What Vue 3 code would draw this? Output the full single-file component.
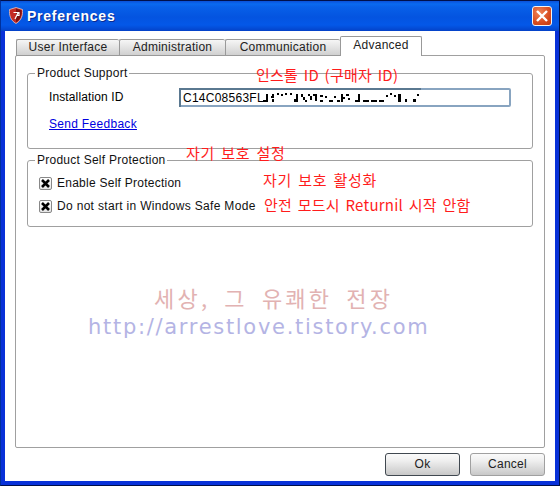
<script setup>
const tabs = [
  { label: 'User Interface', width: 103 },
  { label: 'Administration', width: 106 },
  { label: 'Communication', width: 115 }
]
const masks = [
  [0,8,5,2],[3,2,2,8],[9,2,2,2],[8,4,3,2],[9,7,2,3],[14,1,2,2],[18,2,2,2],[22,1,2,2],[27,1,2,2],
  [31,7,3,3],[33,2,2,8],[38,2,2,3],[40,5,2,3],[42,8,2,2],[45,2,2,2],[47,4,2,4],[50,2,2,2],[52,2,2,7],[57,3,3,2],[57,8,3,2],
  [62,4,2,2],[66,8,4,2],[71,4,2,2],[74,8,3,2],[78,2,2,8],[80,5,2,2],[83,2,3,2],[85,6,2,2],
  [92,8,3,2],[95,2,2,8],[100,8,6,2],[108,8,6,2],[116,8,5,2],[123,3,2,2],[127,1,2,2],[131,3,2,2],
  [135,2,3,8],[142,7,2,3],[150,7,3,3],[154,2,2,2]
]
</script>

<template>
  <div class="window">
    <header class="titlebar">
      <svg class="app-icon" width="14" height="17" viewBox="0 0 14 17">
        <path d="M7 .5 13.500 2.500C14 8 12.500 13.500 7 16.500 1.500 13.500 0 8 .5 2.500Z" fill="#c42a24" stroke="#e8c8c0" stroke-width=".8" />
        <path d="M7 1.500 12.500 3.200C13 8 11.500 12.500 7 15.200Z" fill="#7d1312" />
        <path d="M4.500 5.500H9.200L6 12M7.500 8.500H10V5" fill="none" stroke="#fff" stroke-width="1.200" />
      </svg>
      <span class="title">Preferences</span>
      <button class="close" aria-label="Close">
        <svg width="12" height="12" viewBox="0 0 12 12">
          <path d="M1 1 11 11M11 1 1 11" stroke="#fff" stroke-width="2.400" />
        </svg>
      </button>
    </header>

    <div class="client">
      <nav class="tabs">
        <div v-for="tab in tabs" :key="tab.label" class="tab" :style="{ width: tab.width + 'px' }">{{ tab.label }}</div>
        <div class="tab active">Advanced</div>
      </nav>

      <main class="panel">
        <fieldset class="group support">
          <legend>Product Support</legend>
          <div class="id-row">
            <label class="id-label">Installation ID</label>
            <div class="id-input">
              <span>C14C08563FL</span>
              <svg class="mask" width="160" height="12" viewBox="0 0 160 12">
                <rect v-for="(m, i) in masks" :key="i" :x="m[0]" :y="m[1]" :width="m[2]" :height="m[3]" fill="#000" />
              </svg>
            </div>
          </div>
          <a class="link" href="#">Send Feedback</a>
        </fieldset>

        <fieldset class="group protection">
          <legend>Product Self Protection</legend>
          <div class="check-row">
            <span class="check">
              <svg width="9" height="9" viewBox="0 0 9 9"><path d="M1 1 8 8M8 1 1 8" stroke="#000" stroke-width="2.600" /></svg>
            </span>
            <span>Enable Self Protection</span>
          </div>
          <div class="check-row">
            <span class="check">
              <svg width="9" height="9" viewBox="0 0 9 9"><path d="M1 1 8 8M8 1 1 8" stroke="#000" stroke-width="2.600" /></svg>
            </span>
            <span class="long">Do not start in Windows Safe Mode</span>
          </div>
        </fieldset>
      </main>

      <footer class="footer">
        <button class="btn default">Ok</button>
        <button class="btn">Cancel</button>
      </footer>
    </div>

    <span class="note n1">인스톨 ID (구매자 ID)</span>
    <span class="note n2">자기 보호 설정</span>
    <span class="note n3">자기 보호 활성화</span>
    <span class="note n4">안전 모드시 Returnil 시작 안함</span>
    <span class="mark mark-ko">세상, 그 유쾌한 전장</span>
    <span class="mark mark-url">http://arrestlove.tistory.com</span>
  </div>
</template>

<style scoped>
.window {
  position: relative;
  width: 560px;
  height: 486px;
  box-sizing: border-box;
  display: flex;
  flex-direction: column;
  overflow: hidden;
  background: #0831d9;
  border: 1px solid #00104a;
  border-left-color: #00309c;
  font-family: "Liberation Sans", Arial, sans-serif;
  font-size: 12px;
  letter-spacing: 0.25px;
  color: #000;
}
.titlebar {
  height: 30px;
  flex: none;
  display: flex;
  align-items: center;
  padding: 0 7px 1px 8px;
  box-sizing: border-box;
  background: linear-gradient(#0a50d8 0, #0a6af0 3px, #0860e8 6px, #0454e0 16px, #0458e8 24px, #0442c8 30px);
}
.app-icon {
  flex: none;
}
.title {
  margin-left: 4px;
  color: #fff;
  font-size: 14px;
  font-weight: 700;
  letter-spacing: 0.75px;
  text-shadow: 1px 1px 0 #0a2a90;
}
.close {
  margin-left: auto;
  width: 20px;
  height: 20px;
  padding: 0;
  display: flex;
  align-items: center;
  justify-content: center;
  border: 1px solid #f4f4f4;
  border-radius: 3px;
  background: radial-gradient(circle at 35% 30%, #ee8458, #d84c20 60%, #c03810);
}
.client {
  flex: 1;
  min-height: 0;
  margin: 0 4px 4px 4px;
  padding: 5px 10px 5px 10px;
  display: flex;
  flex-direction: column;
  background: #fff;
}
.tabs {
  height: 20px;
  flex: none;
  display: flex;
  align-items: flex-end;
  padding-left: 1px;
  position: relative;
  z-index: 1;
}
.tab {
  height: 17px;
  box-sizing: border-box;
  text-align: center;
  line-height: 15px;
  border: 1px solid #999;
  border-right-width: 0;
  border-radius: 2px 2px 0 0;
  background: linear-gradient(#f6f6f6, #d0d0d0);
  color: #222;
}
.tab.active {
  width: 82px;
  height: 20px;
  line-height: 17px;
  border-right-width: 1px;
  border-bottom: 0;
  background: #fff;
}
.panel {
  flex: 1;
  margin-top: -1px;
  padding: 9px 11px 0;
  display: flex;
  flex-direction: column;
  gap: 3px;
  border: 1px solid #a0a0a0;
  border-radius: 2px;
}
.group {
  margin: 0;
  padding: 0;
  box-sizing: border-box;
  min-width: 0;
  border: 1px solid #a0a0a0;
  border-radius: 3px;
}
.group legend {
  margin-left: 7px;
  padding: 0 2px;
  line-height: 16px;
  color: #111;
}
.support {
  height: 84px;
}
.protection {
  height: 75px;
}
.id-row {
  display: flex;
  align-items: center;
  margin: 7px 0 0 21px;
}
.id-label {
  width: 131px;
  margin-top: -1px;
  letter-spacing: 0.12px;
}
.id-input {
  position: relative;
  width: 332px;
  height: 19px;
  margin-left: -1px;
  box-sizing: border-box;
  display: flex;
  align-items: center;
  padding-left: 2px;
  border: 2px solid #88a4c0;
  border-radius: 2px;
}
.id-input::before {
  content: "";
  position: absolute;
  left: -2px;
  top: -2px;
  width: 242px;
  height: 2px;
  background: #5a7890;
}
.id-input::after {
  content: "";
  position: absolute;
  left: -2px;
  top: -2px;
  width: 2px;
  height: 19px;
  background: #5a7890;
}
.mask {
  margin-left: -1px;
}
.link {
  display: inline-block;
  margin: 10px 0 0 21px;
  color: #0000e0;
  letter-spacing: 0.3px;
  text-decoration: underline;
}
.check-row {
  display: flex;
  align-items: center;
  height: 14px;
  margin: 0 0 9px 11px;
  gap: 5px;
  color: #111;
}
.protection .check-row:first-of-type {
  margin-top: 8px;
}
.long {
  letter-spacing: 0.32px;
}
.check {
  width: 13px;
  height: 13px;
  box-sizing: border-box;
  display: flex;
  align-items: center;
  justify-content: center;
  border: 1px solid #888;
  border-radius: 2px;
  background: linear-gradient(#fff, #e4e4e4);
}
.footer {
  flex: none;
  display: flex;
  justify-content: flex-end;
  gap: 10px;
  padding-top: 5px;
}
.btn {
  width: 75px;
  height: 23px;
  padding: 0 0 1px;
  font: inherit;
  letter-spacing: inherit;
  color: #222;
  border: 1px solid #a0a0a0;
  border-radius: 3px;
  background: linear-gradient(#fafafa, #f0f0f0 30%, #c8c8c8);
}
.btn.default {
  border-color: #404850;
}
.note {
  position: absolute;
  color: #ff1c1c;
  font-family: "Noto Sans CJK KR", sans-serif;
  font-size: 15px;
  line-height: 18px;
  letter-spacing: 0.25px;
  word-spacing: 2px;
  white-space: nowrap;
}
.n1 { left: 255px; top: 65px; }
.n2 { left: 185px; top: 143px; letter-spacing: 0.75px; }
.n3 { left: 262px; top: 170px; letter-spacing: 0.75px; }
.n4 { left: 263px; top: 195px; }
.mark {
  position: absolute;
  font-family: "Noto Sans CJK KR", "DejaVu Sans", sans-serif;
  white-space: nowrap;
}
.mark-ko {
  left: 153px;
  top: 283px;
  color: #e2b2b2;
  font-size: 22px;
  line-height: 26px;
  letter-spacing: 3.200px;
  word-spacing: 6px;
}
.mark-url {
  left: 87px;
  top: 313px;
  color: #b4b4e4;
  font-family: "DejaVu Sans", sans-serif;
  font-size: 21px;
  line-height: 26px;
  letter-spacing: 1.700px;
}
</style>
